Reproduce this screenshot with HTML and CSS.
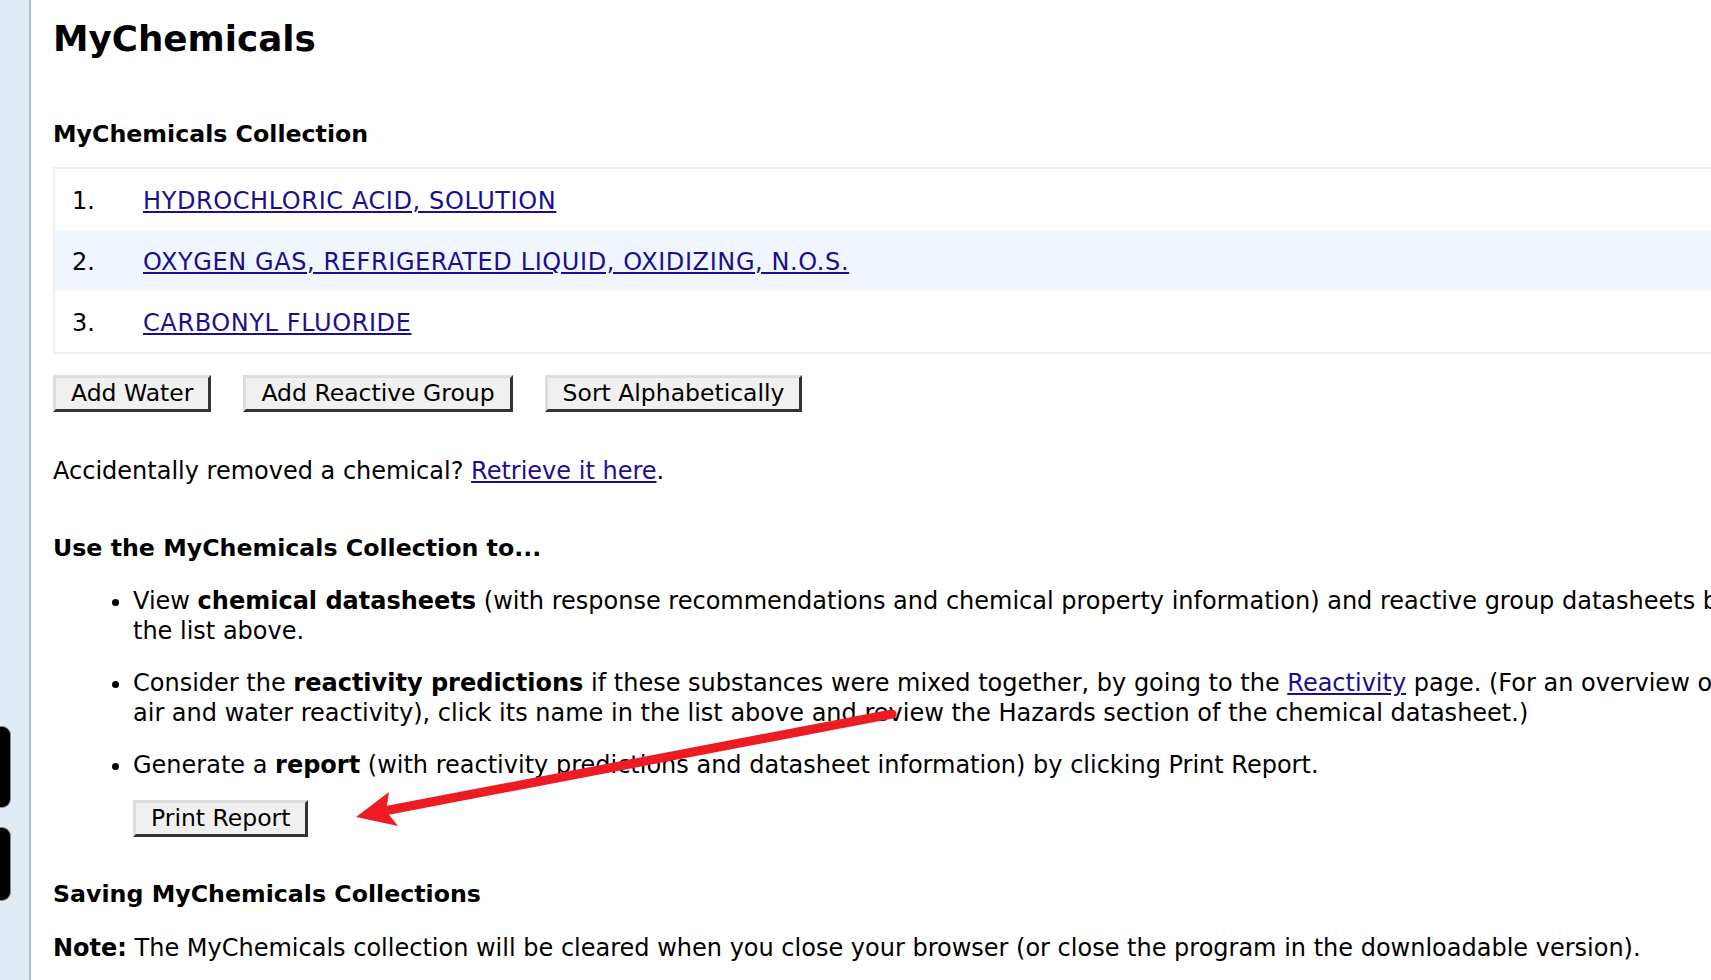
FILE: index.html
```html
<!DOCTYPE html>
<html lang="en">
<head>
    <meta charset="UTF-8">
    <title>MyChemicals</title>
    <link rel="stylesheet" href="styles.css">
</head>
<body>

<div class="page">
    <div class="sidebar">
        <div class="tabs">
            <div class="tab tab-first"></div>
            <div class="tab tab-second"></div>
        </div>
    </div>

    <div class="main">
        <h1>MyChemicals</h1>

        <h3 class="first">MyChemicals Collection</h3>

        <div class="collection">
            <div class="row">
                <span class="num">1.</span>
                <a href="#">HYDROCHLORIC ACID, SOLUTION</a>
            </div>
            <div class="row alt">
                <span class="num">2.</span>
                <a href="#">OXYGEN GAS, REFRIGERATED LIQUID, OXIDIZING, N.O.S.</a>
            </div>
            <div class="row">
                <span class="num">3.</span>
                <a href="#">CARBONYL FLUORIDE</a>
            </div>
        </div>

        <div class="actions">
            <button>Add Water</button>
            <button>Add Reactive Group</button>
            <button>Sort Alphabetically</button>
        </div>

        <p class="retrieve">Accidentally removed a chemical? <a href="#">Retrieve it here</a>.</p>

        <h3 class="uses-title">Use the MyChemicals Collection to...</h3>

        <ul class="uses">
            <li>View <b>chemical datasheets</b> (with response recommendations and chemical property information) and reactive group datasheets by clicking their names in the list above.</li>
            <li>Consider the <b>reactivity predictions</b> if these substances were mixed together, by going to the <a href="#">Reactivity</a> page. (For an overview of each chemical's specific air and water reactivity), click its name in the list above and review the Hazards section of the chemical datasheet.)</li>
            <li>Generate a <b>report</b> (with reactivity predictions and datasheet information) by clicking Print Report.
                <div class="report">
                    <button>Print Report</button>
                </div>
            </li>
        </ul>

        <h3 class="saving">Saving MyChemicals Collections</h3>

        <p class="note"><b>Note:</b> The MyChemicals collection will be cleared when you close your browser (or close the program in the downloadable version).</p>
    </div>
</div>

<svg class="arrow" width="1711" height="980" viewBox="0 0 1711 980">
    <line x1="892" y1="714" x2="384" y2="811" stroke="#ed1c24" stroke-width="9" stroke-linecap="round"/>
    <polygon points="356,817 389,792 386,811 398,826" fill="#ed1c24"/>
</svg>

</body>
</html>
```

FILE: styles.css
```css
* {
    box-sizing: border-box;
}

html, body {
    overflow: hidden;
}

body {
    margin: 0;
    font-family: "DejaVu Sans", Verdana, sans-serif;
    font-size: 24px;
    line-height: 29.5px;
    color: #000;
    background: #fff;
}

.page {
    display: flex;
    min-height: 100vh;
}

.sidebar {
    flex: 0 0 31px;
    background-color: #e1ebf5;
    border-right: 2px solid #a9c0d4;
}

.tabs {
    display: flex;
    flex-direction: column;
    gap: 19px;
    padding-top: 726px;
}

.tab {
    width: 11px;
    background-color: #000;
    border: 1px solid #8a8a8a;
    border-left: none;
    border-radius: 0 9px 9px 0;
}

.tab-first {
    height: 82px;
}

.tab-second {
    height: 74px;
}

.main {
    flex: 0 0 auto;
    width: 2004px;
    padding-left: 22px;
}

h1 {
    font-size: 35.7px;
    line-height: normal;
    margin: 18px 0 0;
}

h3 {
    font-size: 23.7px;
    margin: 0;
}

h3.first {
    margin-top: 61px;
}

a {
    color: #1c0f8f;
}

.collection {
    margin-top: 17px;
    border: 2px solid #efefef;
}

.row {
    display: flex;
    align-items: center;
    height: 61px;
    padding: 6px 0 0 17px;
}

.row.alt {
    background-color: #eff6fd;
}

.row a {
    letter-spacing: 0.6px;
}

.num {
    width: 71px;
}

.actions {
    display: flex;
    gap: 32px;
    margin-top: 21px;
}

button {
    font-family: "DejaVu Sans", Verdana, sans-serif;
    font-size: 23.5px;
    line-height: 27px;
    padding: 2px 15px;
    background-color: #f0f0f0;
    color: #000;
    border: 3px solid;
    border-color: #dddddd #333333 #333333 #dddddd;
    border-radius: 0;
}

.retrieve {
    margin: 45px 0 0;
}

h3.uses-title {
    margin-top: 47.5px;
}

.uses {
    margin: 24px 0 0;
    padding-left: 80px;
}

.uses li {
    margin-bottom: 23px;
}

.uses li:last-child {
    margin-bottom: 0;
}

.report {
    margin-top: 19px;
}

h3.saving {
    margin-top: 43px;
}

.note {
    margin: 24.5px 0 0;
}

.arrow {
    position: absolute;
    left: 0;
    top: 0;
    pointer-events: none;
}
```
